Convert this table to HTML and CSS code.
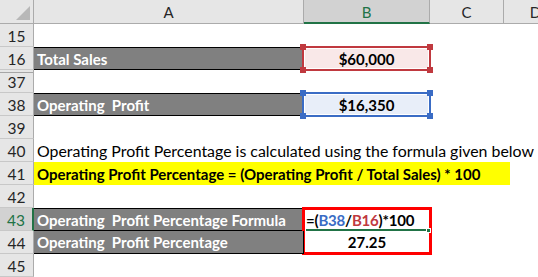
FILE: index.html
```html
<!DOCTYPE html>
<html>
<head>
<meta charset="utf-8">
<link rel="stylesheet" href="styles.css">
</head>
<body>
<div class="sheet">
  <div class="corner"><span class="tri"></span></div>
  <div class="colhead">A</div>
  <div class="colhead sel">B</div>
  <div class="colhead">C</div>
  <div class="colhead">D</div>

  <div class="rowhead">15</div><div class="cell"></div><div class="cell"></div><div class="cell"></div><div class="cell"></div>

  <div class="rowhead">16</div>
  <div class="cell label top">Total Sales</div>
  <div class="cell hl hl-red"><span class="h tl"></span><span class="h tr"></span><span class="h bl"></span><span class="h br"></span><span class="val">$60,000</span></div>
  <div class="cell"></div><div class="cell"></div>

  <div class="rowhead gap">37</div><div class="cell"></div><div class="cell"></div><div class="cell"></div><div class="cell"></div>

  <div class="rowhead">38</div>
  <div class="cell label top">Operating&nbsp; Profit</div>
  <div class="cell hl hl-blue"><span class="h tl"></span><span class="h tr"></span><span class="h bl"></span><span class="h br"></span><span class="val">$16,350</span></div>
  <div class="cell"></div><div class="cell"></div>

  <div class="rowhead">39</div><div class="cell"></div><div class="cell"></div><div class="cell"></div><div class="cell"></div>

  <div class="rowhead">40</div>
  <div class="cell text wide">Operating Profit Percentage is calculated using the formula given below</div>

  <div class="rowhead">41</div>
  <div class="cell wide"><div class="yellow">Operating Profit Percentage = (Operating Profit / Total Sales) * 100</div></div>

  <div class="rowhead">42</div><div class="cell"></div><div class="cell"></div><div class="cell"></div><div class="cell"></div>

  <div class="rowhead active">43</div>
  <div class="cell label top">Operating&nbsp; Profit Percentage Formula</div>
  <div class="result">
    <div class="res-row formula">=(<span class="rb">B38</span>/<span class="rr">B16</span>)*100<span class="fill"></span></div>
    <div class="res-row num">27.25</div>
  </div>
  <div class="cell"></div><div class="cell"></div>

  <div class="rowhead">44</div>
  <div class="cell label">Operating&nbsp; Profit Percentage</div>
  <div class="cell"></div><div class="cell"></div>

  <div class="rowhead">45</div><div class="cell"></div><div class="cell"></div><div class="cell"></div><div class="cell"></div>
</div>
</body>
</html>
```

FILE: styles.css
```css
html, body {
  margin: 0;
  padding: 0;
  background: #ffffff;
  overflow: hidden;
}

.sheet {
  display: grid;
  grid-template-columns: 34px 270px 126px 74px 64px;
  grid-template-rows: 24px repeat(11, 23px);
  font-family: Lato, "Noto Sans", sans-serif;
  font-size: 15px;
  color: #000;
  width: 568px;
}

.corner {
  background: #e6e6e6;
  border-right: 1px solid #ababab;
  border-bottom: 1px solid #ababab;
  position: relative;
}
.tri {
  position: absolute;
  right: 3px;
  bottom: 3px;
  width: 0;
  height: 0;
  border-left: 14px solid transparent;
  border-bottom: 14px solid #b8b8b8;
}

.colhead {
  background: #e6e6e6;
  border-right: 1px solid #ababab;
  border-bottom: 1px solid #ababab;
  display: flex;
  align-items: center;
  justify-content: center;
  color: #262626;
  font-size: 15px;
  padding-top: 1px;
}
.colhead.sel {
  background: #d2d2d2;
  border-bottom: 2px solid #217346;
  color: #217346;
}

.rowhead {
  background: #e6e6e6;
  border-right: 1px solid #ababab;
  border-bottom: 1px solid #c8c8c8;
  display: flex;
  align-items: center;
  justify-content: center;
  color: #262626;
  font-size: 15.5px;
  padding-top: 1px;
}
.rowhead.gap {
  box-shadow: inset 0 2px 0 #e6e6e6, inset 0 3px 0 #a6a6a6;
}
.rowhead.active {
  background: #d2d2d2;
  color: #217346;
  border-right: 2px solid #217346;
}

.cell {
  display: flex;
  align-items: center;
  white-space: nowrap;
  min-width: 0;
}

.label {
  background: #808080;
  color: #ffffff;
  font-weight: bold;
  padding-left: 3px;
  border-bottom: 1px solid #000;
  border-right: 1px solid #000;
}
.label.top {
  border-top: 1px solid #000;
}

.wide {
  grid-column: 2 / 6;
}
.text {
  padding-left: 3px;
  font-size: 15.9px;
}
.yellow {
  background: #ffff00;
  width: 473px;
  height: 100%;
  padding-left: 3px;
  display: flex;
  align-items: center;
  font-weight: bold;
}

.hl {
  position: relative;
  margin: -1px -1px -1px -2px;
  justify-content: center;
  font-weight: bold;
  padding-top: 1px;
}
.hl-red {
  border: 2px solid #c0393f;
  background: #f9e8e8;
  box-shadow: inset 0 0 0 1px #ffffff;
}
.hl-blue {
  border: 2px solid #3a6cc5;
  background: #e8eef9;
  box-shadow: inset 0 0 0 1px #ffffff;
}
.h {
  position: absolute;
  width: 6px;
  height: 6px;
}
.hl-red .h { background: #c0393f; }
.hl-blue .h { background: #3a6cc5; }
.tl { left: -4px; top: -4px; }
.tr { right: -4px; top: -4px; }
.bl { left: -4px; bottom: -4px; }
.br { right: -4px; bottom: -4px; }

.result {
  grid-column: 3;
  grid-row: 10 / 12;
  margin: -1px -2px -1px -2px;
  border: 3px solid #ff0000;
  display: grid;
  grid-template-rows: 1fr 1fr;
  font-weight: bold;
}
.res-row {
  display: flex;
  align-items: center;
  white-space: nowrap;
  position: relative;
}
.formula {
  border-bottom: 2px solid #217346;
  margin: 0 1px;
  letter-spacing: -0.2px;
}
.rb { color: #3a6cc5; }
.rr { color: #c0393f; }
.fill {
  position: absolute;
  right: -3px;
  bottom: -4px;
  width: 5px;
  height: 5px;
  background: #217346;
  border: 1px solid #ffffff;
  box-sizing: border-box;
}
.num {
  justify-content: center;
}
```
